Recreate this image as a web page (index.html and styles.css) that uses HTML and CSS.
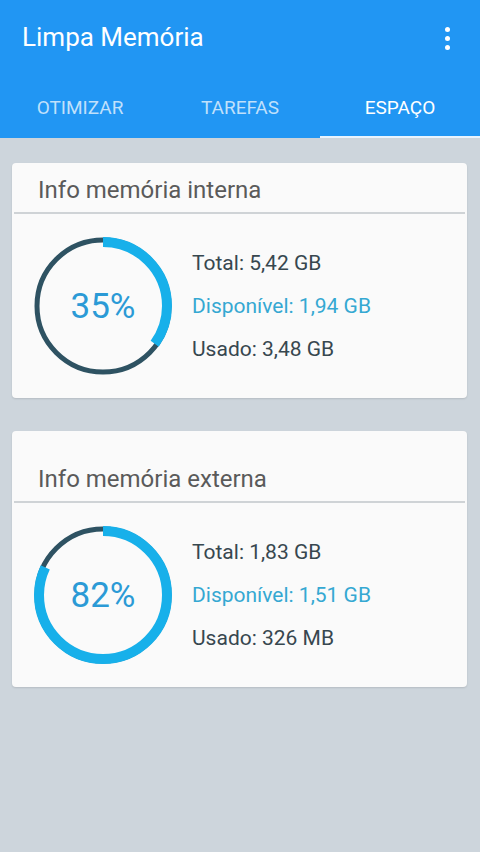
FILE: index.html
```html
<!DOCTYPE html>
<html>
<head>
  <title>Limpa Memória</title>
  <link rel="stylesheet" href="styles.css">
</head>
<body>
  <div class="appbar">
    <div class="toolbar">
      <span class="title">Limpa Memória</span>
      <span class="menu"><i></i><i></i><i></i></span>
    </div>
    <div class="tabs">
      <div class="tab">OTIMIZAR</div>
      <div class="tab">TAREFAS</div>
      <div class="tab active">ESPAÇO</div>
    </div>
  </div>

  <div class="content">
    <div class="card">
      <div class="card-head">Info memória interna</div>
      <div class="card-body">
        <div class="ring">
          <svg width="140" height="140" viewBox="0 0 140 140">
            <circle class="ring-bg" cx="70" cy="70" r="66"></circle>
            <circle class="ring-fg" cx="70" cy="70" r="64" stroke-dasharray="140.7 402.1" transform="rotate(-90 70 70)"></circle>
          </svg>
          <span class="pct">35%</span>
        </div>
        <div class="info">
          <div>Total: 5,42 GB</div>
          <div class="free">Disponível: 1,94 GB</div>
          <div>Usado: 3,48 GB</div>
        </div>
      </div>
    </div>

    <div class="card">
      <div class="card-head tall">Info memória externa</div>
      <div class="card-body">
        <div class="ring">
          <svg width="140" height="140" viewBox="0 0 140 140">
            <circle class="ring-bg" cx="70" cy="70" r="66"></circle>
            <circle class="ring-fg" cx="70" cy="70" r="64" stroke-dasharray="329.7 402.1" transform="rotate(-90 70 70)"></circle>
          </svg>
          <span class="pct">82%</span>
        </div>
        <div class="info">
          <div>Total: 1,83 GB</div>
          <div class="free">Disponível: 1,51 GB</div>
          <div>Usado: 326 MB</div>
        </div>
      </div>
    </div>
  </div>
</body>
</html>
```

FILE: styles.css
```css
body {
  margin: 0;
  background-color: #cdd5dc;
  font-family: Roboto, "Noto Sans", sans-serif;
  width: 480px;
  height: 852px;
}
.appbar {
  background-color: #2196f3;
  color: white;
}
.toolbar {
  height: 76px;
  display: flex;
  align-items: center;
  justify-content: space-between;
  padding: 0 22px;
}
.title {
  font-size: 26px;
  margin-top: -3px;
}
.menu {
  display: flex;
  flex-direction: column;
  gap: 4px;
  margin-right: 8px;
}
.menu i {
  display: block;
  width: 5px;
  height: 5px;
  border-radius: 50%;
  background: white;
}
.tabs {
  display: flex;
  height: 62px;
}
.tab {
  flex: 1;
  display: flex;
  align-items: center;
  justify-content: center;
  font-size: 19px;
  color: rgba(255, 255, 255, 0.72);
  box-sizing: border-box;
  padding-top: 1px;
}
.tab.active {
  color: white;
  border-bottom: 2px solid #e8f4fe;
  padding-top: 3px;
}
.content {
  padding: 25px 13px 0 12px;
  display: flex;
  flex-direction: column;
  gap: 33px;
}
.card {
  background-color: #fafafa;
  border-radius: 4px;
  box-shadow: 0 1px 2px rgba(0, 0, 0, 0.12);
}
.card-head {
  font-size: 24px;
  color: #5a5a5a;
  line-height: 28px;
  padding: 13px 24px 8px;
  margin: 0 2px;
  border-bottom: 2px solid #cfd3d6;
}
.card-head.tall {
  padding-top: 34px;
}
.card-body {
  height: 184px;
  display: flex;
  align-items: center;
  padding-left: 21px;
  gap: 19px;
}
.ring {
  position: relative;
  width: 140px;
  height: 140px;
}
.ring svg {
  display: block;
}
.ring-bg {
  fill: none;
  stroke: #2e5262;
  stroke-width: 5;
}
.ring-fg {
  fill: none;
  stroke: #17b0ea;
  stroke-width: 10;
}
.pct {
  position: absolute;
  inset: 0;
  display: flex;
  align-items: center;
  justify-content: center;
  font-size: 35px;
  color: #2b9ad6;
}
.info {
  display: flex;
  flex-direction: column;
  gap: 16px;
  font-size: 21px;
  color: #37474f;
  line-height: 27px;
}
.info .free {
  color: #35a8d2;
}
```
